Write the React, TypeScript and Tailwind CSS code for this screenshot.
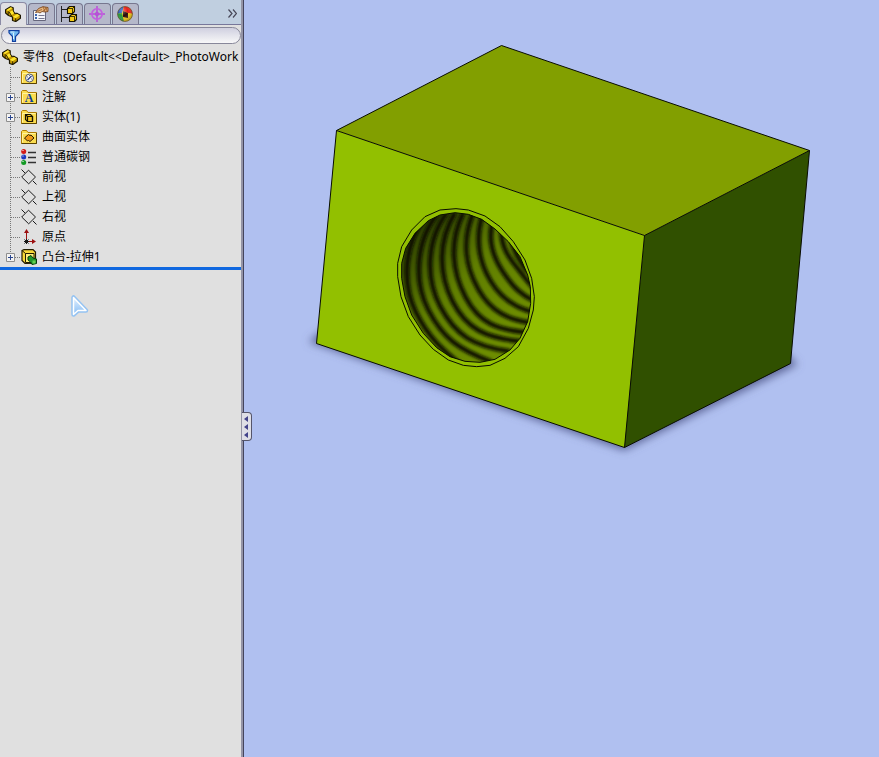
import React, { useState } from 'react';

interface TreeItem {
  label: string;
  icon: React.ReactNode;
  expandable?: boolean;
}

const PartIcon: React.FC = () => (
  <svg width="16" height="16" viewBox="0 0 16 16" aria-hidden="true">
    <path d="M.6 3.800 5.500.7l2.700 1.100v3.400l1.300 2 2.700.2 3.200 1.800v3L10.800 15.500 7.500 14.500V11L3.500 9.500.6 7z" fill="#c79a00" stroke="#1c1600" strokeWidth="1.200" strokeLinejoin="round" />
    <path d="m1.300 4 4.400-2.700 1.800.7-4.300 3zM7.800 10.700l4.500-2.700 2.300 1.400-4 2.800zM4.300 6.200l3.200-2 1.600 3-2.800 2z" fill="#ffe72e" />
    <path d="M3.200 5.200v3.600M4.300 6l2.300 4M10.700 12.300V15" fill="none" stroke="#1c1600" strokeWidth=".9" />
  </svg>
);

const PropertyIcon: React.FC = () => (
  <svg width="18" height="16" viewBox="0 0 18 16" aria-hidden="true">
    <path d="M1.500 4.500h12v10h-12z" fill="#f4f5fa" stroke="#66667c" />
    <path d="M3 8h2v2H3zM3 11h2v2H3z" fill="#3d66b0" />
    <path d="M6.500 9.500h6M6.500 12.500h6" stroke="#77778e" />
    <path d="m3.500 6.500 3-4L11 .7l5 .8v4l-3 .5-3-.5-2 1.500-2-1z" fill="#e8b67c" stroke="#7a4820" strokeWidth=".9" />
    <path d="m6 5 4-1.500M11 .7l2 5M13 1l2.500 4.500M15.500 1.500 11 5" stroke="#8a5022" strokeWidth=".7" />
  </svg>
);

const ConfigIcon: React.FC = () => (
  <svg width="18" height="16" viewBox="0 0 18 16" aria-hidden="true">
    <path d="M1.500 0v16M2 3.500h6M2 11.500h7" fill="none" stroke="#222" />
    <g fill="#f5cc18" stroke="#181400" strokeWidth="1.100" strokeLinejoin="round">
      <path d="m7.500 2.500 2-2h5v5l-2 2h-5z" />
      <path d="m9.500 10.500 2-2h5v5l-2 2h-5z" />
      <path d="M7.500 2.500h5v5M12.500 2.500l2-2M9.500 10.500h5v5M14.500 10.500l2-2" fill="none" strokeWidth=".8" />
    </g>
  </svg>
);

const DimXpertIcon: React.FC = () => (
  <svg width="16" height="16" viewBox="0 0 16 16" aria-hidden="true">
    <path d="M8 0v16M0 8h16" stroke="#b84cd8" strokeWidth="1.500" />
    <circle cx="8" cy="8" r="5.200" fill="none" stroke="#c45fe0" strokeWidth="1.600" />
    <circle cx="8" cy="8" r="1.800" fill="none" stroke="#b84cd8" />
  </svg>
);

const AppearanceIcon: React.FC = () => (
  <svg width="16" height="16" viewBox="0 0 16 16" aria-hidden="true">
    <defs>
      <radialGradient id="ball" cx=".35" cy=".3" r=".8">
        <stop offset="0" stopColor="#fff" stopOpacity=".35" />
        <stop offset=".4" stopColor="#fff" stopOpacity="0" />
        <stop offset="1" stopColor="#000" stopOpacity=".4" />
      </radialGradient>
      <clipPath id="ballClip"><circle cx="8" cy="8" r="7.500" /></clipPath>
    </defs>
    <g clipPath="url(#ballClip)">
      <path d="M0 0h16v16H0z" fill="#f5cc10" />
      <path d="M0 0h7L5 7 0 8z" fill="#2a57b8" />
      <path d="M7 0h9v8l-5-1-5-2z" fill="#e8201a" />
      <path d="m0 8 5-1 2 9H0z" fill="#26983a" />
      <path d="m6 5 5 2v5l-5-1z" fill="#2c0d0a" />
      <path d="m11 7 5 1v4l-5 4z" fill="#f5cc10" />
    </g>
    <circle cx="8" cy="8" r="7.500" fill="url(#ball)" stroke="#55432e" strokeWidth=".6" />
  </svg>
);

const Folder: React.FC<{ children: React.ReactNode }> = ({ children }) => (
  <svg width="16" height="16" viewBox="0 0 16 16" aria-hidden="true">
    <path d="M.5 14.500v-12l1-1h4l1.500 2h8.500v11z" fill="#fbdc50" stroke="#b07c00" />
    <path d="M1.500 13.500v-9h13" fill="none" stroke="#fff3a0" />
    <path d="M.5 14.500h15V4" fill="none" stroke="#5a4300" />
    {children}
  </svg>
);

const SensorIcon: React.FC = () => (
  <Folder>
    <circle cx="8.500" cy="9" r="4" fill="#f4f4f4" stroke="#52586c" />
    <path d="m6.500 11 4-4" stroke="#203c8a" strokeWidth="1.300" />
    <path d="M6 8h1M8 6.500h1M10 10h1" stroke="#777" />
  </Folder>
);

const AnnotationIcon: React.FC = () => (
  <Folder>
    <text x="8" y="13" textAnchor="middle" fontSize="12" fontWeight="bold" fontFamily="Liberation Serif, serif" fill="#0a3c9c">A</text>
  </Folder>
);

const SolidIcon: React.FC = () => (
  <Folder>
    <path d="M4.500 5.500h5l2 2v5h-5l-2-2z" fill="#f2c420" stroke="#191400" strokeWidth="1.200" />
    <path d="M6.500 7.500h5v5h-5zM4.500 5.500l2 2" fill="none" stroke="#191400" strokeWidth="1.200" />
  </Folder>
);

const SurfaceIcon: React.FC = () => (
  <Folder>
    <path d="M3.500 9 7.500 5.500l1.500 1 1-.5 3 3-4 3.500-1.500-1-1 .5z" fill="#f39a18" stroke="#2b1c00" />
  </Folder>
);

const MaterialIcon: React.FC = () => (
  <svg width="16" height="16" viewBox="0 0 16 16" aria-hidden="true">
    <circle cx="2.700" cy="2.500" r="2.500" fill="#d21a16" />
    <circle cx="2.700" cy="8" r="2.500" fill="#1c38c0" />
    <circle cx="2.700" cy="13.500" r="2.500" fill="#139a24" />
    <path d="M1.500 1.500h1M1.500 7h1M1.500 12.500h1" fill="none" stroke="#fff" />
    <path d="M7 3.500h8M7 8.500h8M7 13.500h8" stroke="#333" strokeWidth="1.600" />
  </svg>
);

const PlaneIcon: React.FC = () => (
  <svg width="16" height="16" viewBox="0 0 16 16" aria-hidden="true">
    <path d="M.5.500 4 4M12 12l3.500 3.500M.7 8 7.500 1.200 14.500 8 7.700 14.800z" fill="none" stroke="#1a1a1a" />
  </svg>
);

const OriginIcon: React.FC = () => (
  <svg width="16" height="16" viewBox="0 0 16 16" aria-hidden="true">
    <path d="M5.500 11V3M6 12.500h6" stroke="#9c1010" />
    <path d="m5.500 0 2.500 4H3zM15 12.500 11 10v5z" fill="#9c1010" />
    <path d="m3.500 10.500 4 4M7.500 10.500l-4 4M5.500 10v5M3 12.500h5" stroke="#181818" />
  </svg>
);

const ExtrudeIcon: React.FC = () => (
  <svg width="16" height="16" viewBox="0 0 16 16" aria-hidden="true">
    <path d="M1 1.500 3 .6h9l2.500 2.500v11L4 14.500l-3-3z" fill="#f8d838" stroke="#211b00" strokeWidth="1.200" />
    <path d="M4.500 4.500h8.500v9H4.500zM1 1.500l3.500 3" fill="#fff07a" stroke="#211b00" />
    <path d="m7 8 3-1.500 2 2.500 3.500 1v4.500l-4.500 1-1.500-2.500L7 11z" fill="#1f982b" stroke="#063c0c" />
    <path d="M11.500 11.500h3v3h-3z" fill="#63d152" />
  </svg>
);

const items: TreeItem[] = [
  { label: 'Sensors', icon: <SensorIcon /> },
  { label: '注解', icon: <AnnotationIcon />, expandable: true },
  { label: '实体(1)', icon: <SolidIcon />, expandable: true },
  { label: '曲面实体', icon: <SurfaceIcon /> },
  { label: '普通碳钢', icon: <MaterialIcon /> },
  { label: '前视', icon: <PlaneIcon /> },
  { label: '上视', icon: <PlaneIcon /> },
  { label: '右视', icon: <PlaneIcon /> },
  { label: '原点', icon: <OriginIcon /> },
  { label: '凸台-拉伸1', icon: <ExtrudeIcon />, expandable: true },
];

const tabs = [
  { name: 'FeatureManager', icon: <PartIcon /> },
  { name: 'PropertyManager', icon: <PropertyIcon /> },
  { name: 'ConfigurationManager', icon: <ConfigIcon /> },
  { name: 'DimXpertManager', icon: <DimXpertIcon /> },
  { name: 'DisplayManager', icon: <AppearanceIcon /> },
];

const TreeLines: React.FC<{ last: boolean; expandable?: boolean }> = ({ last, expandable }) => (
  <svg width="20" height="20" viewBox="0 0 20 20" aria-hidden="true">
    <path d={last ? 'M10.500 0v10' : 'M10.500 0v20'} stroke="#777" strokeDasharray="1 1" />
    <path d="M11 10.500h9" stroke="#777" strokeDasharray="1 1" />
    {expandable && (
      <g>
        <path d="M6.500 6.500h8v8h-8z" fill="#f3f3f3" stroke="#8e8e8e" />
        <path d="M8 10.500h5M10.500 8v5" stroke="#28448e" />
      </g>
    )}
  </svg>
);

// dark grooves of the internal thread, left to right
const grooves = [
  'M120 55C58 130 50 250 92 335S180 455 235 500',
  'M157 42C91 125 86 245 130 330S220 448 320 486',
  'M186 38C124 120 121 235 166 320S265 440 375 454',
  'M210 38C157 125 162 225 203 305S300 415 410 424',
  'M235 38C192 125 201 215 242 292S335 390 430 398',
  'M264 40C231 120 241 200 280 268S370 360 440 369',
  'M292 48C270 115 282 185 316 242S395 325 445 337',
  'M323 66C308 120 322 168 354 216S410 285 446 302',
  'M350 88C346 130 363 161 386 190S425 242 446 264',
  'M378 110C380 145 404 184 430 217',
];

const Model: React.FC = () => (
  <svg className="block h-auto w-full" viewBox="244 0 635 757" role="img" aria-label="零件8">
    <defs>
      <filter id="shadow" x="-10%" y="-10%" width="120%" height="130%">
        <feGaussianBlur stdDeviation="4" />
      </filter>
      <filter id="soft"><feGaussianBlur stdDeviation="5" /></filter>
      <linearGradient id="bore" x1="0" y1="0" x2=".7" y2=".8">
        <stop offset="0" stopColor="#1c2800" />
        <stop offset=".3" stopColor="#3c5200" />
        <stop offset=".6" stopColor="#607e00" />
        <stop offset="1" stopColor="#6d8d00" />
      </linearGradient>
      <clipPath id="hole">
        <path d="M210 38 165 45 130 62 90 100 62 145 50 190v45l10 55 20 55 35 55 40 43 40 27 45 14 45 3 45-9 45-28 30-35 23-50 9-55-1-50-8-35-23-55-35-45-40-38-40-29-40-15z" />
      </clipPath>
    </defs>
    <path d="m313 341 311 107 170-84-20-20-440-20z" fill="#5c6596" stroke="#5c6596" strokeWidth="4" filter="url(#shadow)" />
    <path d="m501.500 45.500 308 105-165 85-308-105z" fill="#829f00" />
    <path d="m336.500 130.500 308 105-20 212-308-104z" fill="#92c000" />
    <path d="m644.500 235.500 165-85-19 213-166 84z" fill="#305000" />
    <path d="m336.500 130.500 165-85 308 105-19 213-166 84-308-104zM336.500 130.500l308 105 165-85M644.500 235.500l-20 212" fill="none" stroke="#080c00" strokeLinejoin="round" />
    <g transform="translate(385 200) scale(.33333)">
      <g clipPath="url(#hole)">
        <path d="M30 20h430v490H30z" fill="url(#bore)" />
        <g fill="none" stroke="#0c1100" strokeWidth="14" filter="url(#soft)">
          {grooves.map((d) => <path key={d} d={d} />)}
        </g>
      </g>
      <path d="M210 38 165 45 130 62 90 100 62 145 50 190v45l10 55 20 55 35 55 40 43 40 27 45 14 45 3 45-9 45-28 30-35 23-50 9-55-1-50-8-35-23-55-35-45-40-38-40-29-40-15z" fill="none" stroke="#080c00" strokeWidth="3" />
      <path d="m213 26-48 4-45 20-40 40-30 50-12 50v40l10 60 22 60 35 55 40 43 45 32 45 16 40 4 40-4 45-21 40-35 30-55 15-55 3-40-8-55-20-55-35-55-40-45-45-32-50-18z" fill="none" stroke="#080c00" strokeWidth="3" />
    </g>
  </svg>
);

const App: React.FC = () => {
  const [activeTab, setActiveTab] = useState(0);
  const [filter, setFilter] = useState('');

  return (
    <div className="flex min-h-screen bg-[#b0c0f0] font-['Noto_Sans','Noto_Sans_CJK_SC',sans-serif] text-[12px] text-black">
      <aside className="relative flex w-[244px] shrink-0 border-r border-[#44445c] bg-[#e0e0e0]">
        <div className="min-w-0 flex-1 border-r-2 border-[#9494a6]">
          <div className="flex h-[25px] items-end border-b border-[#77779a] bg-[#c0cfe0]">
            {tabs.map((tab, i) => (
              <button
                key={tab.name}
                type="button"
                aria-label={tab.name}
                onClick={() => setActiveTab(i)}
                className={
                  i === activeTab
                    ? '-mb-px flex h-[23px] w-[27px] items-center justify-center rounded-t-sm border border-b-0 border-[#8b8ba5] bg-[#e0e0e4] pr-0.5'
                    : 'ml-px flex h-[21px] w-[27px] items-center justify-center rounded-t-sm border border-b-0 border-[#77778f] bg-[#b5b8ca] pr-0.5'
                }
              >
                {tab.icon}
              </button>
            ))}
            <button type="button" aria-label="More tabs" className="mb-0.5 ml-auto p-1">
              <svg width="9" height="9" viewBox="0 0 9 9" aria-hidden="true">
                <path d="m.5.500 3.500 4-3.500 4M5 .5l3.500 4L5 8.500" fill="none" stroke="#474757" strokeWidth="1.200" />
              </svg>
            </button>
          </div>

          <label className="mt-0.5 ml-px flex h-[17px] items-center rounded-full border border-[#88889a] bg-linear-to-b from-[#d0d0e0] to-[#f8f8f8] pl-1.5">
            <svg width="12" height="12" viewBox="0 0 12 12" aria-hidden="true">
              <path d="M1 .600h10v2.200L7.500 6.500v4.900h-3V6.500L1 2.800z" fill="#70b8f0" stroke="#1040a0" strokeWidth="1.200" />
              <path d="M2.500 2h4M5.500 3v6" stroke="#d8f4ff" />
            </svg>
            <input
              type="text"
              aria-label="Filter"
              value={filter}
              onChange={(e) => setFilter(e.target.value)}
              className="ml-1 h-full min-w-0 flex-1 bg-transparent outline-none"
            />
          </label>

          <div className="mt-[3px] flex h-5 items-center overflow-hidden pl-0.5 whitespace-pre">
            <span className="mr-[5px] shrink-0"><PartIcon /></span>
            零件8{'   '}(Default&lt;&lt;Default&gt;_PhotoWork
          </div>
          <ul className="border-b-[3px] border-[#1068e0]">
            {items.map((item, i) => (
              <li key={item.label} className="flex h-5 items-center whitespace-nowrap">
                {item.expandable ? (
                  <button type="button" aria-label={'Expand ' + item.label}>
                    <TreeLines last={i === items.length - 1} expandable />
                  </button>
                ) : (
                  <TreeLines last={false} />
                )}
                <span className="mr-[5px] ml-px">{item.icon}</span>
                {item.label}
              </li>
            ))}
          </ul>
        </div>

        {/* pointer */}
        <svg className="absolute top-[292px] left-[68px]" width="24" height="30" viewBox="0 0 24 30" aria-hidden="true">
          <defs>
            <linearGradient id="pointer" x1="0" y1="0" x2="0" y2="1">
              <stop offset="0" stopColor="#e4f1fe" />
              <stop offset="1" stopColor="#86bdf5" />
            </linearGradient>
          </defs>
          <path d="M5.500 5.500v17l4.500-4h8z" fill="none" stroke="#8dc0f4" strokeWidth="4.500" strokeLinejoin="round" opacity=".9" />
          <path d="M5.500 5.500v17l4.500-4h8z" fill="url(#pointer)" stroke="#fff" strokeWidth="1.500" strokeLinejoin="round" />
        </svg>

        <button
          type="button"
          aria-label="Collapse panel"
          className="absolute top-[412px] -right-[9px] flex h-[29px] w-[10px] items-center rounded-r border border-l-0 border-[#55556b] bg-[#dedee6]"
        >
          <svg width="7" height="27" viewBox="0 0 7 27" aria-hidden="true">
            <path d="M6 3v6L2 6zM6 11v6l-4-3zM6 19v6l-4-3z" fill="#42428a" />
          </svg>
        </button>
      </aside>
      <main className="min-w-0 flex-1">
        <Model />
      </main>
    </div>
  );
};

export default App;
